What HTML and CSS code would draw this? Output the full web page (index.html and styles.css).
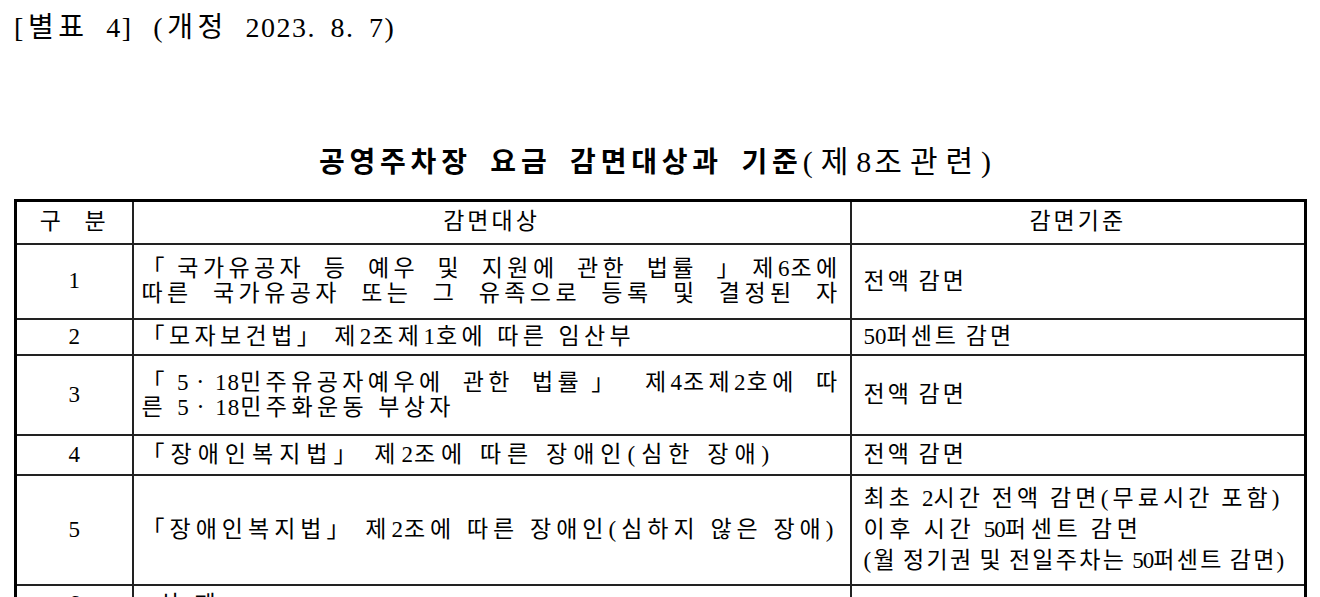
FILE: index.html
```html
<!DOCTYPE html>
<html lang="ko">
<head>
<meta charset="utf-8">
<title>별표 4</title>
<link rel="stylesheet" href="styles.css">
</head>
<body>
<div class="page">
  <p class="annex">[별표 <span class="num">4</span>] (개정 <span class="num">2023. 8. 7</span>)</p>
  <h1 class="title"><span class="title-main">공영주차장 요금 감면대상과 기준</span><span class="title-sub">(제<span class="num">8</span>조관련)</span></h1>
  <table class="grid">
    <colgroup>
      <col class="c-no">
      <col class="c-target">
      <col class="c-rule">
    </colgroup>
    <tr class="r-head">
      <th class="h-no">구 분</th>
      <th>감면대상</th>
      <th>감면기준</th>
    </tr>
    <tr class="r1">
      <td class="no">1</td>
      <td class="target"><span class="line full">「국가유공자 등 예우 및 지원에 관한 법률 」제<span class="num">6</span>조에</span><span class="line full">따른 국가유공자 또는 그 유족으로 등록 및 결정된 자</span></td>
      <td class="rule">전액 감면</td>
    </tr>
    <tr class="r2">
      <td class="no">2</td>
      <td class="target">「모자보건법」 제<span class="num">2</span>조제<span class="num">1</span>호에 따른 임산부</td>
      <td class="rule"><span class="num">50</span>퍼센트 감면</td>
    </tr>
    <tr class="r3">
      <td class="no">3</td>
      <td class="target"><span class="line full">「<span class="num">5</span>ㆍ<span class="num">18</span>민주유공자예우에 관한 법률」 제<span class="num">4</span>조제<span class="num">2</span>호에 따</span><span class="line">른 <span class="num">5</span>ㆍ<span class="num">18</span>민주화운동 부상자</span></td>
      <td class="rule">전액 감면</td>
    </tr>
    <tr class="r4">
      <td class="no">4</td>
      <td class="target wide">「장애인복지법」 제<span class="num">2</span>조에 따른 장애인(심한 장애)</td>
      <td class="rule">전액 감면</td>
    </tr>
    <tr class="r5">
      <td class="no">5</td>
      <td class="target mid">「장애인복지법」 제<span class="num">2</span>조에 따른 장애인(심하지 않은 장애)</td>
      <td class="rule multi"><span class="line l-a">최초 <span class="num">2</span>시간 전액 감면(무료시간 포함)</span><span class="line l-b">이후 시간 <span class="num n50">50</span>퍼센트 감면</span><span class="line l-c">(월 정기권 및 전일주차는 <span class="num n50">50</span>퍼센트 감면)</span></td>
    </tr>
    <tr class="r6">
      <td class="no">6</td>
      <td class="target">&lt;삭 제&gt;</td>
      <td class="rule"></td>
    </tr>
  </table>
</div>
</body>
</html>
```

FILE: styles.css
```css
html, body {
  margin: 0;
  padding: 0;
  background: #fff;
}

body {
  font-family: "Liberation Serif", "Noto Sans CJK KR", serif;
  color: #000;
  font-size: 23px;
}

.page {
  padding: 0 0 0 14px;
  width: 1290px;
}

.annex {
  margin: 0;
  padding-top: 10px;
  height: 36px;
  line-height: 36px;
  font-size: 28px;
  letter-spacing: 4.6px;
  word-spacing: 6px;
}

.annex .num {
  letter-spacing: 1.5px;
}

.title {
  margin: 0;
  padding-top: 94px;
  height: 59px;
  line-height: 40px;
  text-align: center;
  font-weight: normal;
  font-size: 28px;
  white-space: nowrap;
}

.title-main {
  font-family: "Noto Sans CJK KR", sans-serif;
  font-weight: 700;
  letter-spacing: 4.8px;
  word-spacing: 6px;
}

.title-sub {
  font-size: 30px;
  letter-spacing: 8px;
}

.title-sub .num {
  letter-spacing: 3px;
}

.grid {
  border-collapse: collapse;
  width: 1290px;
  table-layout: fixed;
  border: 3px solid #000;
}

.c-no { width: 117px; }
.c-target { width: 718px; }
.c-rule { width: 455px; }

.grid th,
.grid td {
  border: 2px solid #222;
  padding: 0;
  vertical-align: middle;
  font-weight: normal;
}

.grid th {
  text-align: center;
  line-height: 24px;
  letter-spacing: 3px;
}

.h-no {
  word-spacing: 12px;
}

.r-head { height: 43px; }
.r1 { height: 75px; }
.r2 { height: 36px; }
.r3 { height: 80px; }
.r4 { height: 40px; }
.r5 { height: 110px; }
.r6 { height: 40px; }

.no {
  text-align: center;
}

.target {
  padding: 0 8px !important;
  line-height: 25px;
  letter-spacing: 4.4px;
  white-space: nowrap;
}

.target.wide {
  letter-spacing: 6px;
}

.target.mid {
  letter-spacing: 5px;
}

.target .num {
  letter-spacing: 1px;
}

.line {
  display: block;
}

.line.full {
  text-align: justify;
  text-align-last: justify;
  white-space: normal;
}

.rule {
  padding: 0 10px 0 12px !important;
  line-height: 25px;
  letter-spacing: 3px;
  word-spacing: -2px;
  white-space: nowrap;
}

.rule .num {
  letter-spacing: 0;
}

.rule .n50 {
  letter-spacing: -1px;
}

.rule.multi {
  line-height: 31px;
}

.l-a { letter-spacing: 4.1px; }
.l-b { letter-spacing: 4.7px; }
.l-c { letter-spacing: 2.3px; }
```
